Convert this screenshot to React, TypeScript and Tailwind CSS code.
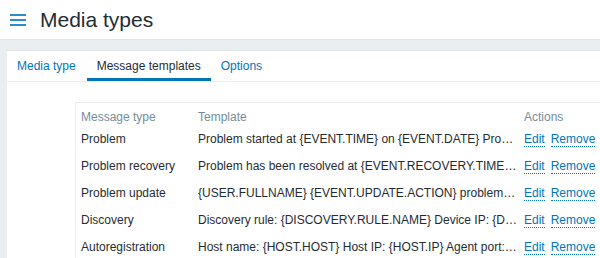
import React from 'react';

const TEMPLATES = [
  { type: 'Problem', text: 'Problem started at {EVENT.TIME} on {EVENT.DATE} Problem name: {EVENT.NAME}' },
  { type: 'Problem recovery', text: 'Problem has been resolved at {EVENT.RECOVERY.TIME} on {EVENT.RECOVERY.DATE}' },
  { type: 'Problem update', text: '{USER.FULLNAME} {EVENT.UPDATE.ACTION} problem at {EVENT.UPDATE.DATE} {EVENT.UPDATE.TIME}' },
  { type: 'Discovery', text: 'Discovery rule: {DISCOVERY.RULE.NAME} Device IP: {DISCOVERY.DEVICE.IPADDRESS}' },
  { type: 'Autoregistration', text: 'Host name: {HOST.HOST} Host IP: {HOST.IP} Agent port: {HOST.PORT}' },
];

const App: React.FC = () => {
  return (
    <div className="w-[600px] h-[258px] overflow-hidden bg-[#ebeef0] font-['Liberation_Sans',Arial,sans-serif] text-[12px] text-[#1f2c33]">
      {/* Header */}
      <div className="h-[40px] bg-white border-b border-[#dfe4e7] flex items-center">
        <div className="ml-[10px] w-[16px] flex flex-col gap-[3px]">
          <span className="block h-[2px] bg-[#2d8cc9]"></span>
          <span className="block h-[2px] bg-[#2d8cc9]"></span>
          <span className="block h-[2px] bg-[#2d8cc9]"></span>
        </div>
        <h1 className="ml-[14px] text-[21px] leading-none text-[#1f2c33] mt-[-1px]">Media types</h1>
      </div>

      {/* Card */}
      <div className="ml-[7px] mt-[10px] bg-white border-t border-[#dfe4e7] h-[220px]">
        {/* Tabs */}
        <div className="flex h-[31px] border-b border-[#ebeef0]">
          <div className="px-[10px] flex items-center whitespace-nowrap text-[#0275b8]">Media type</div>
          <div className="ml-[1px] px-[10px] flex items-center whitespace-nowrap border-b-[3px] border-[#0275b8] text-[#1f2c33] pt-[3px]">Message templates</div>
          <div className="px-[10px] flex items-center whitespace-nowrap text-[#0275b8]">Options</div>
        </div>

        {/* Table */}
        <div className="ml-[68px] mt-[20px] w-[600px] border-t border-l border-[#ebeef0]">
          <div className="grid grid-cols-[117px_326px_1fr] h-[23px] items-end text-[#768d99] leading-[15px] pb-[1px]">
            <div className="pl-[5px]">Message type</div>
            <div className="pl-[5px]">Template</div>
            <div className="pl-[5px]">Actions</div>
          </div>
          {TEMPLATES.map((row) => (
            <div key={row.type} className="grid grid-cols-[117px_326px_1fr] h-[27px] items-center leading-[15px]">
              <div className="pl-[5px] whitespace-nowrap">{row.type}</div>
              <div className="pl-[5px] pr-[1px] truncate">{row.text}</div>
              <div className="pl-[5px] flex items-center gap-[6px] text-[#0275b8]">
                <span className="border-b border-dotted border-[#0275b8] leading-[13px]">Edit</span>
                <span className="border-b border-dotted border-[#0275b8] leading-[13px]">Remove</span>
              </div>
            </div>
          ))}
        </div>
      </div>
    </div>
  );
};

export default App;
